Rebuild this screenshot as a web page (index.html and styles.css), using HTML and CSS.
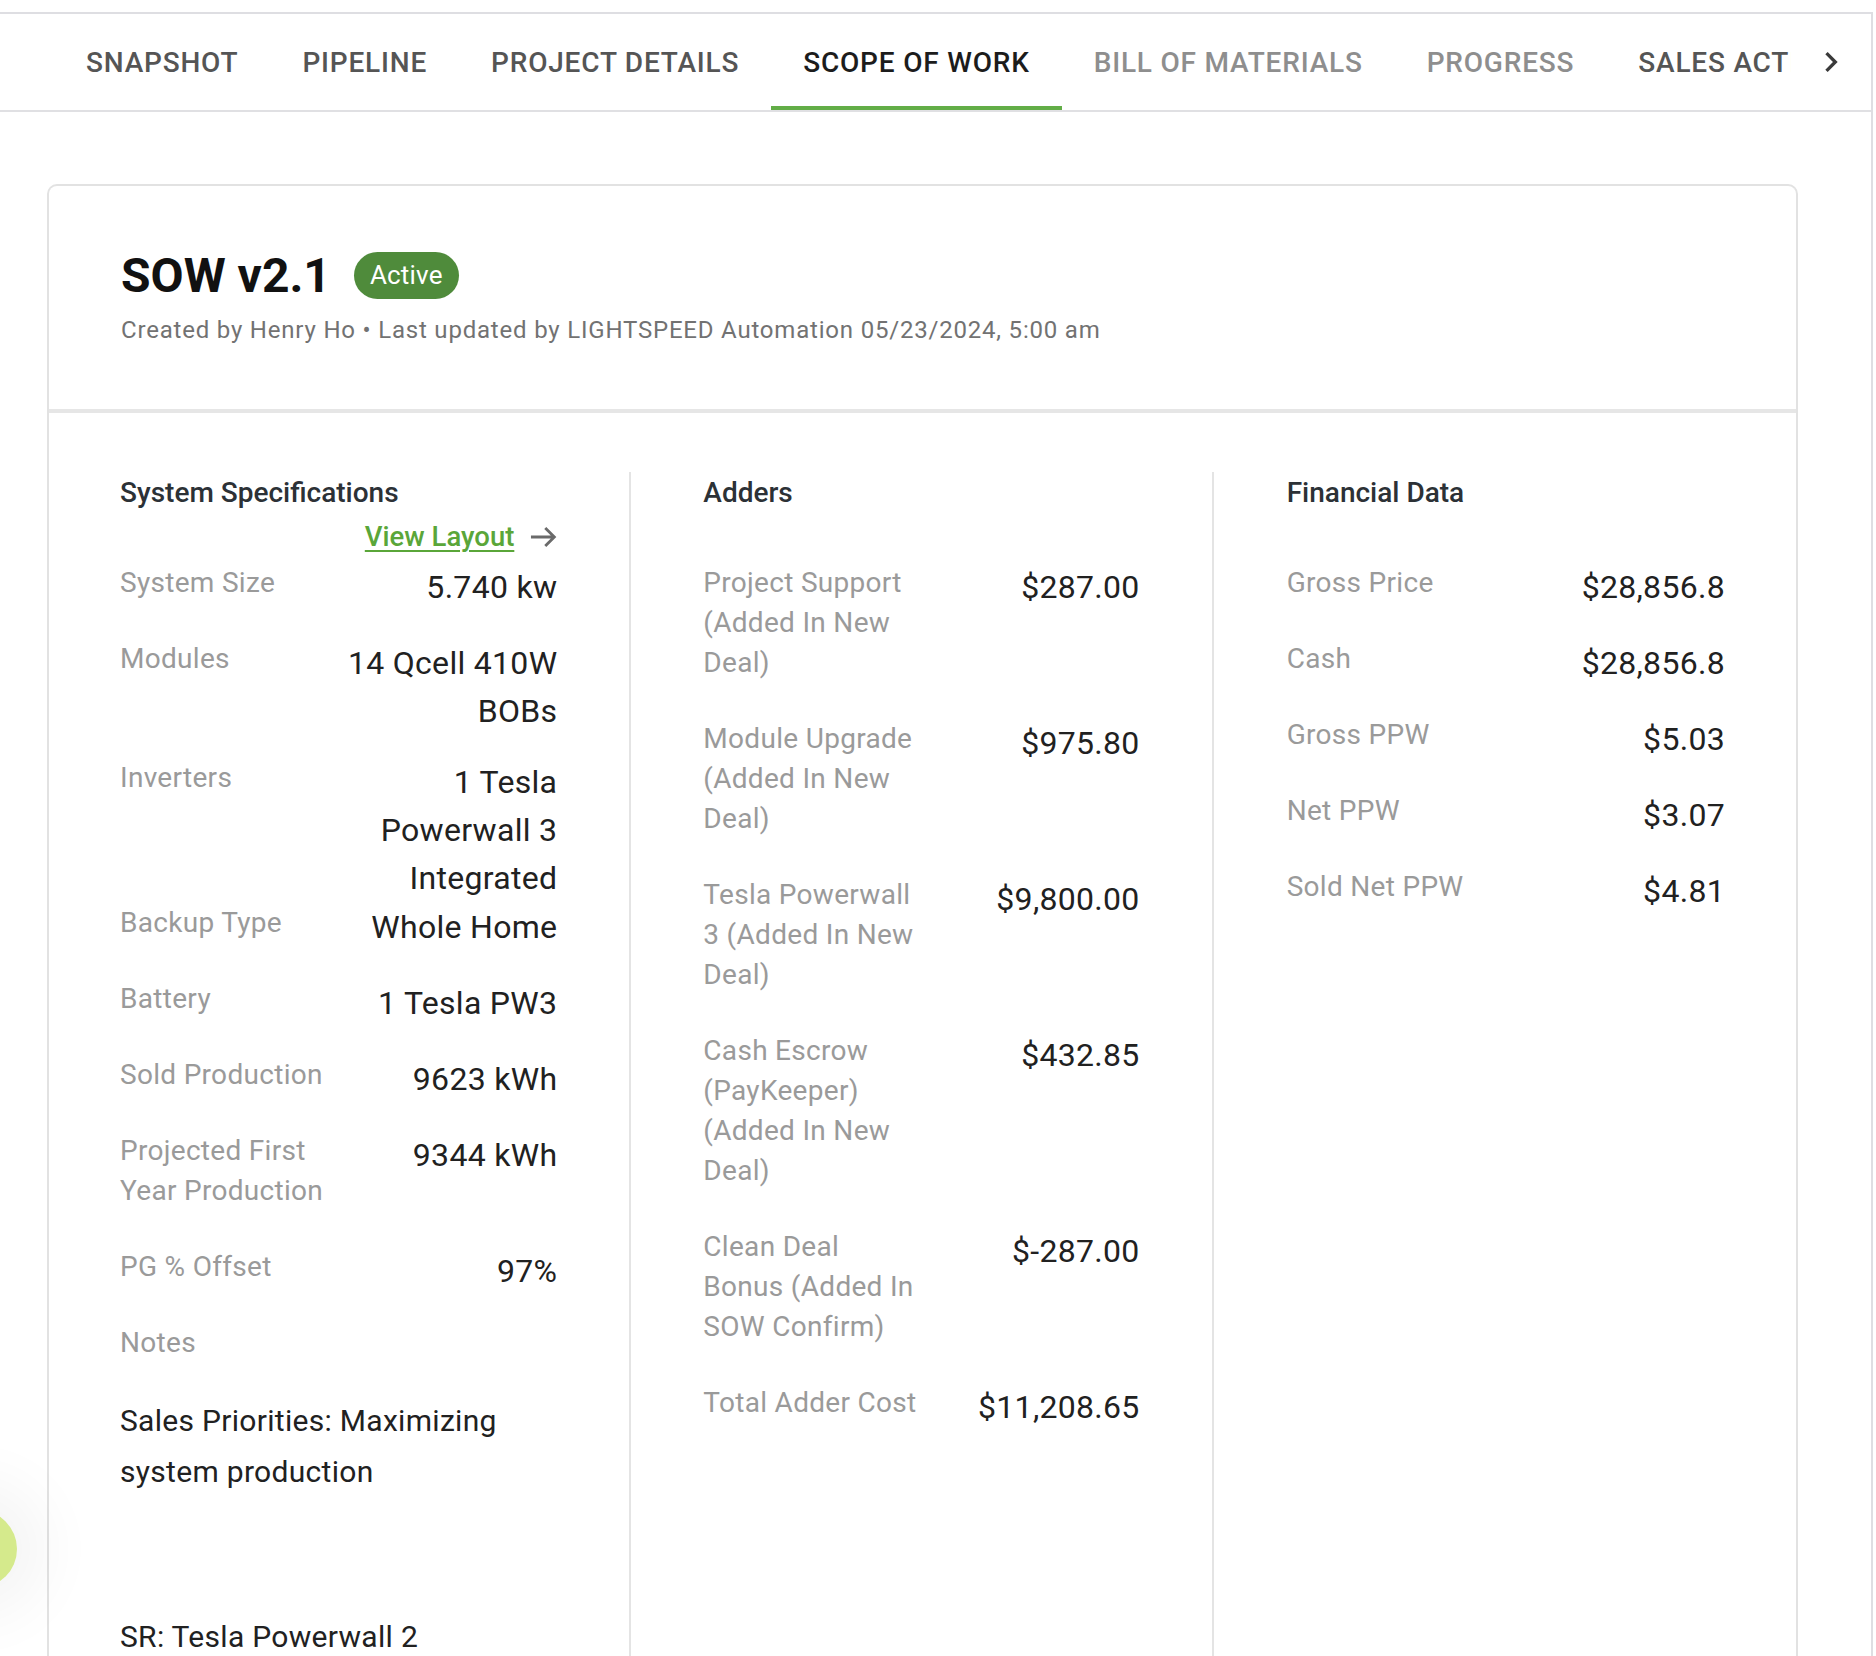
FILE: index.html
```html
<!DOCTYPE html>
<html lang="en">
<head>
<meta charset="utf-8">
<title>Scope of Work</title>
<link rel="stylesheet" href="styles.css">
</head>
<body>
<div class="app">
  <nav class="tabs">
    <div class="tab-list">
      <a class="tab">Snapshot</a>
      <a class="tab">Pipeline</a>
      <a class="tab">Project Details</a>
      <a class="tab tab--active">Scope of Work</a>
      <a class="tab tab--muted">Bill of Materials</a>
      <a class="tab tab--muted">Progress</a>
      <a class="tab">Sales Activity</a>
    </div>
    <button class="tab-scroll" type="button" aria-label="Scroll tabs">
      <svg viewBox="0 0 24 24" width="40" height="40"><path d="M8.59 16.59 13.17 12 8.59 7.41 10 6l6 6-6 6z"/></svg>
    </button>
  </nav>

  <main class="page">
    <section class="card">
      <header class="card-head">
        <div class="title-row">
          <h1 class="title">SOW v2.1</h1>
          <span class="badge">Active</span>
        </div>
        <p class="meta">Created by Henry Ho • Last updated by LIGHTSPEED Automation 05/23/2024, 5:00 am</p>
      </header>

      <div class="card-body">
        <div class="col">
          <div class="col-head">
            <h2 class="col-title">System Specifications</h2>
            <div class="link-row">
              <a class="link">View Layout</a>
              <svg class="link-arrow" viewBox="0 0 24 24" width="34" height="34"><path d="M3.5 12H20M13.6 5.6 20 12l-6.4 6.4"/></svg>
            </div>
          </div>
          <dl class="rows">
            <div class="row"><dt>System Size</dt><dd>5.740 kw</dd></div>
            <div class="row"><dt>Modules</dt><dd>14 Qcell 410W BOBs</dd></div>
            <div class="row row--flush"><dt>Inverters</dt><dd>1 Tesla Powerwall 3 Integrated</dd></div>
            <div class="row"><dt>Backup Type</dt><dd>Whole Home</dd></div>
            <div class="row"><dt>Battery</dt><dd>1 Tesla PW3</dd></div>
            <div class="row"><dt>Sold Production</dt><dd>9623 kWh</dd></div>
            <div class="row"><dt>Projected First Year Production</dt><dd>9344 kWh</dd></div>
            <div class="row"><dt>PG % Offset</dt><dd>97%</dd></div>
            <div class="row"><dt>Notes</dt></div>
          </dl>
          <div class="notes">
            <p>Sales Priorities: Maximizing system production</p>
            <p class="notes-gap">SR: Tesla Powerwall 2</p>
          </div>
        </div>

        <div class="col">
          <div class="col-head">
            <h2 class="col-title">Adders</h2>
          </div>
          <dl class="rows">
            <div class="row"><dt>Project Support (Added In New Deal)</dt><dd>$287.00</dd></div>
            <div class="row"><dt>Module Upgrade (Added In New Deal)</dt><dd>$975.80</dd></div>
            <div class="row"><dt>Tesla Powerwall 3 (Added In New Deal)</dt><dd>$9,800.00</dd></div>
            <div class="row"><dt>Cash Escrow (PayKeeper) (Added In New Deal)</dt><dd>$432.85</dd></div>
            <div class="row"><dt>Clean Deal Bonus (Added In SOW Confirm)</dt><dd>$-287.00</dd></div>
            <div class="row"><dt>Total Adder Cost</dt><dd>$11,208.65</dd></div>
          </dl>
        </div>

        <div class="col">
          <div class="col-head">
            <h2 class="col-title">Financial Data</h2>
          </div>
          <dl class="rows">
            <div class="row"><dt>Gross Price</dt><dd>$28,856.8</dd></div>
            <div class="row"><dt>Cash</dt><dd>$28,856.8</dd></div>
            <div class="row"><dt>Gross PPW</dt><dd>$5.03</dd></div>
            <div class="row"><dt>Net PPW</dt><dd>$3.07</dd></div>
            <div class="row"><dt>Sold Net PPW</dt><dd>$4.81</dd></div>
          </dl>
        </div>
      </div>
    </section>
  </main>

  <div class="fab" aria-hidden="true"></div>
</div>
</body>
</html>
```

FILE: styles.css
```css
* { box-sizing: border-box; }

html, body {
  margin: 0;
  padding: 0;
  background: #ffffff;
  font-family: Roboto, "Helvetica Neue", Arial, sans-serif;
  color: #212121;
  overflow: hidden;
}

.app {
  width: 1873px;
  margin-top: 12px;
  border-top: 2px solid #dedee2;
  border-right: 2px solid #dedee2;
  min-height: 1700px;
}

/* ---------- tabs ---------- */
.tabs {
  display: flex;
  height: 98px;
  border-bottom: 2px solid #e0e0e3;
}

.tab-list {
  flex: 1;
  display: flex;
  overflow: hidden;
  padding-left: 54px;
}

.tab {
  flex: 0 0 auto;
  display: flex;
  align-items: center;
  height: 96px;
  padding: 0 32px;
  font-size: 28px;
  font-weight: 500;
  letter-spacing: 0.8px;
  text-transform: uppercase;
  white-space: nowrap;
  color: #555555;
  cursor: pointer;
}

.tab--active {
  color: #1c1c1c;
  box-shadow: inset 0 -4px 0 #62ad47;
}

.tab--muted {
  color: #8e8e8e;
}

.tab-scroll {
  flex: 0 0 80px;
  height: 96px;
  display: flex;
  align-items: center;
  justify-content: center;
  border: 0;
  padding: 0;
  background: transparent;
}

.tab-scroll svg { fill: #3a3a3a; }

/* ---------- page / card ---------- */
.page {
  padding: 72px 73px 0 47px;
}

.card {
  border: 2px solid #e2e2e2;
  border-bottom: 0;
  border-radius: 10px 10px 0 0;
  background: #ffffff;
}

.card-head {
  padding: 66px 72px 61px;
  border-bottom: 4px solid #e6e6e6;
}

.title-row {
  display: flex;
  align-items: flex-start;
  gap: 23px;
}

.title {
  margin: 0;
  font-size: 48px;
  line-height: 48px;
  font-weight: 700;
  color: #111111;
}

.badge {
  margin-top: 0;
  height: 47px;
  padding: 0 16px;
  border-radius: 24px;
  background: #4f8b3b;
  color: #ffffff;
  font-size: 26px;
  line-height: 47px;
  letter-spacing: 0.2px;
}

.meta {
  margin: 12px 0 0;
  font-size: 24px;
  line-height: 36px;
  letter-spacing: 0.8px;
  color: #727272;
}

/* ---------- columns ---------- */
.card-body {
  display: grid;
  grid-template-columns: repeat(3, 1fr);
  padding-top: 59px;
}

.col {
  padding: 1px 72px 240px 72px;
  border-right: 2px solid #e4e4e4;
}

.col:first-child {
  padding-left: 71px;
}

.col:last-child {
  border-right: 0;
  padding-left: 73px;
  padding-right: 71px;
}

.col-head {
  min-height: 90px;
}

.col-title {
  margin: 0;
  font-size: 28px;
  line-height: 40px;
  font-weight: 500;
  color: #2c3136;
}

.link-row {
  display: flex;
  justify-content: flex-end;
  align-items: center;
  gap: 12px;
  height: 40px;
  margin-top: 4px;
}

.link {
  font-size: 27.5px;
  line-height: 40px;
  font-weight: 500;
  color: #5aa639;
  text-decoration: underline;
  text-underline-offset: 4px;
  text-decoration-thickness: 2px;
  cursor: pointer;
}

.link-arrow {
  fill: none;
  stroke: #6a6a6a;
  stroke-width: 2;
  margin-right: -3px;
}

.rows {
  margin: 0;
}

.row {
  display: flex;
  align-items: flex-start;
}

.row dt {
  flex: 0 0 50%;
  margin: 0 0 36px;
  font-size: 28px;
  line-height: 40px;
  letter-spacing: 0.3px;
  color: #9a9a9a;
}

.row dd {
  flex: 1 1 auto;
  margin: 0 0 23px;
  text-align: right;
  font-size: 32px;
  line-height: 48px;
  letter-spacing: 0.3px;
  color: #212121;
}

.row--flush dd { margin-bottom: 1px; }

.notes {
  margin-top: -4px;
}

.notes p {
  margin: 0;
  font-size: 30px;
  line-height: 51px;
  letter-spacing: 0.3px;
  color: #212121;
}

.notes .notes-gap {
  margin-top: 114px;
}

/* ---------- floating button ---------- */
.fab {
  position: fixed;
  left: -61px;
  top: 1510px;
  width: 78px;
  height: 78px;
  border-radius: 50%;
  background: #d5ea8c;
  box-shadow: 0 0 60px 30px rgba(0, 0, 0, 0.045);
}
```
